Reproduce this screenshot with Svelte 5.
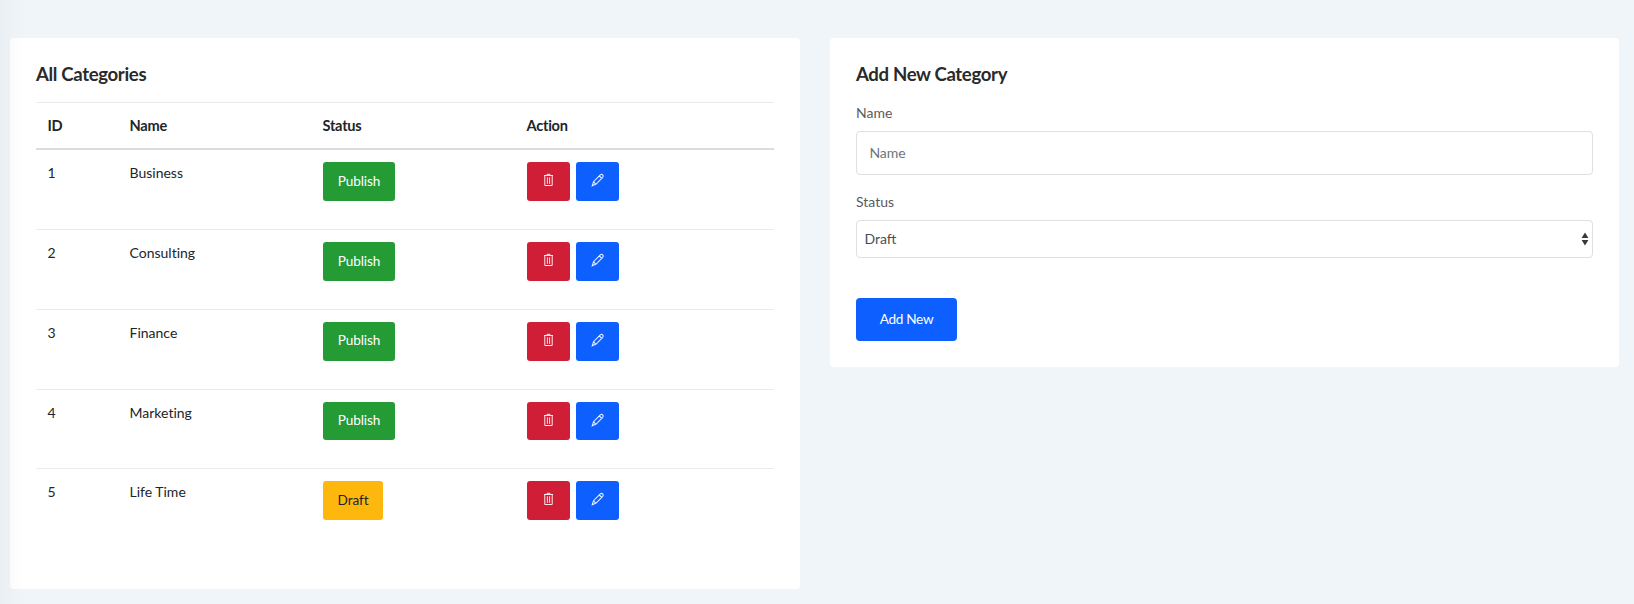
<script>
  const categories = [
    { id: 1, name: 'Business', status: 'Publish' },
    { id: 2, name: 'Consulting', status: 'Publish' },
    { id: 3, name: 'Finance', status: 'Publish' },
    { id: 4, name: 'Marketing', status: 'Publish' },
    { id: 5, name: 'Life Time', status: 'Draft' }
  ];
</script>

<main>
  <section class="card list">
    <h4>All Categories</h4>
    <div class="table">
      <div class="row head">
        <span>ID</span><span>Name</span><span>Status</span><span>Action</span>
      </div>
      {#each categories as c}
        <div class="row">
          <span class="txt">{c.id}</span>
          <span class="txt">{c.name}</span>
          <span><button class="btn" class:draft={c.status === 'Draft'}>{c.status}</button></span>
          <span class="actions">
            <button class="btn icon red" aria-label="Delete">
              <svg width="14" height="14" viewBox="0 0 14 14">
                <path d="M2 2.5h9M5 2.3V1.3h3v1M2.8 2.7v9.8h7.4V2.7M5.4 4.3v6.6M7.6 4.3v6.6" />
              </svg>
            </button>
            <button class="btn icon blue" aria-label="Edit">
              <svg width="14" height="14" viewBox="0 0 14 14">
                <path d="M1.3 12.7l1.2-4 6.8-6.8q1.4-1 2.4 0t0 2.4l-6.6 6.8zM2.5 8.9l2.4 2.2M8.3 3l2.5 2.5" />
              </svg>
            </button>
          </span>
        </div>
      {/each}
    </div>
  </section>

  <section class="card form">
    <h4>Add New Category</h4>
    <label for="name">Name</label>
    <input id="name" type="text" placeholder="Name" />
    <label for="status">Status</label>
    <div class="select">
      <select id="status"><option>Draft</option><option>Publish</option></select>
      <svg class="caret" width="8" height="14" viewBox="0 0 8 14">
        <path d="M4 .5L7.4 6H.6zM4 13.5L.6 8h6.8z" />
      </svg>
    </div>
    <button class="add">Add New</button>
  </section>
  <div class="shade"></div>
</main>

<style>
  :global(body) {
    background: #f0f5f9;
  }
  main {
    box-sizing: border-box;
    position: relative;
    display: flex;
    align-items: flex-start;
    gap: 30px;
    height: 604px;
    padding: 38px 15px 0 10px;
    font: 14px/21px Lato, sans-serif;
    font-variant-ligatures: none;
    color: #212529;
  }
  .shade {
    position: absolute;
    left: 0;
    top: 0;
    width: 26px;
    height: 604px;
    background: linear-gradient(90deg, rgba(0, 0, 0, 0.025), transparent);
    pointer-events: none;
  }
  .card {
    box-sizing: border-box;
    background: #fff;
    border-radius: 4px;
    padding: 26px;
  }
  .list {
    width: 790px;
    height: 551px;
  }
  .form {
    width: 789px;
    height: 329px;
  }
  h4 {
    margin: 0;
    height: 38px;
    font-size: 18.6px;
    line-height: 20px;
    font-weight: 700;
    letter-spacing: -0.35px;
    color: #2a2a2a;
  }
  .row {
    box-sizing: border-box;
    display: grid;
    grid-template-columns: 81.5px 193px 204px 1fr;
    height: 79.75px;
    padding-top: 12px;
    border-top: 1px solid #e9ebec;
  }
  .row > span {
    padding-left: 12px;
  }
  .row > span:first-child {
    padding-left: 11.5px;
  }
  .row.head {
    height: 48px;
    font-size: 14.6px;
    font-weight: 700;
    letter-spacing: -0.25px;
    padding-top: 12px;
    border-bottom: 2px solid #d8dde1;
  }
  .row.head + .row {
    height: 79.15px;
    padding-top: 12.4px;
    border-top: 0;
  }
  .row > .txt {
    line-height: 22px;
  }
  .btn {
    box-sizing: border-box;
    display: block;
    margin: 0 0 0 0.5px;
    height: 38.75px;
    width: 72px;
    padding: 0 0 1px;
    border: 0;
    border-radius: 3px;
    background: #259b35;
    color: #fff;
    font: 13.6px/21px Lato, sans-serif;
    letter-spacing: -0.1px;
  }
  .btn.draft {
    width: 60px;
    background: #feb70d;
    color: #212529;
  }
  .actions {
    display: flex;
    gap: 6px;
  }
  .btn.icon {
    width: 43px;
  }
  .btn.icon + .btn.icon {
    margin-left: 0;
  }
  .btn.red {
    background: #cf1e36;
  }
  .btn.blue {
    background: #0d60ff;
  }
  .icon svg {
    display: block;
    margin: -2px auto 0;
    fill: none;
    stroke: #fff;
    stroke-opacity: 0.9;
    stroke-width: 1;
  }
  .blue svg {
    stroke-width: 1.1;
  }
  label {
    display: block;
    height: 29px;
    line-height: 22px;
    color: #5b5b5b;
  }
  input,
  select {
    box-sizing: border-box;
    display: block;
    width: 100%;
    border: 1px solid #dddfe1;
    border-radius: 4px;
    background: #fff;
    font: 14px/21px Lato, sans-serif;
    outline: 0;
  }
  input {
    height: 44px;
    margin-bottom: 16px;
    padding: 0 12.4px 1px;
  }
  input::placeholder {
    color: #6c757d;
    opacity: 1;
  }
  .select {
    position: relative;
    margin-bottom: 40px;
  }
  select {
    appearance: none;
    height: 38px;
    padding: 0 7.5px 1px;
    color: #495057;
  }
  .caret {
    position: absolute;
    right: 4px;
    top: 12px;
    fill: #343a40;
  }
  .add {
    display: block;
    width: 101px;
    height: 43px;
    padding: 0;
    border: 0;
    border-radius: 4px;
    background: #0d60ff;
    color: #fff;
    font: 13.6px/21px Lato, sans-serif;
    letter-spacing: -0.3px;
  }
</style>
